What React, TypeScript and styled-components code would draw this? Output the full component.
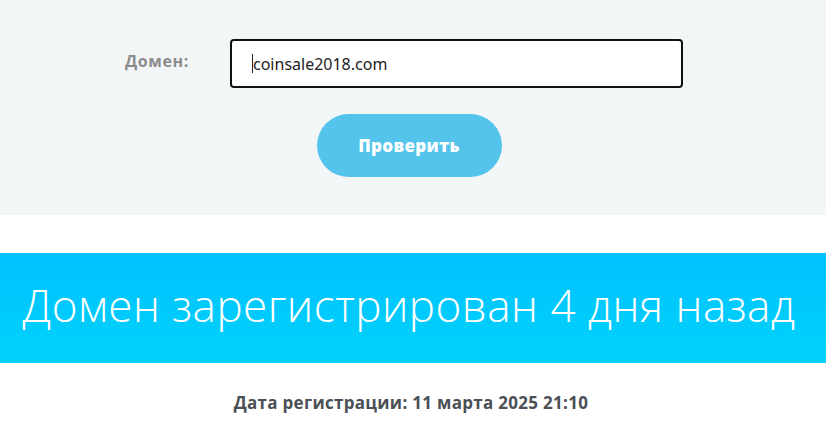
import styled, { createGlobalStyle } from 'styled-components';

const GlobalStyle = createGlobalStyle`
  html, body {
    margin: 0;
    padding: 0;
    background: #ffffff;
  }
  * {
    box-sizing: border-box;
  }
`;

const Page = styled.div`
  width: 100%;
  font-family: 'Open Sans', 'Liberation Sans', sans-serif;
`;

const FormPanel = styled.section`
  background: #f2f6f7;
  height: 215px;
  padding-top: 39px;
  display: flex;
  flex-flow: column nowrap;
  align-items: center;
`;

const FieldRow = styled.div`
  display: flex;
  align-items: center;
  padding-left: 125px;
  width: 100%;
`;

const Label = styled.label`
  width: 105px;
  font-size: 16px;
  font-weight: 700;
  color: #8c8c8c;
  letter-spacing: 0.6px;
  margin-top: -5px;
`;

const DomainInput = styled.div`
  width: 453px;
  height: 49px;
  border: 2px solid #111;
  border-radius: 4px;
  background: #fff;
  display: flex;
  align-items: center;
  padding-left: 20px;
  font-family: 'Noto Sans', 'Liberation Sans', sans-serif;
  font-size: 16px;
  color: #222;
`;

const Caret = styled.span`
  display: inline-block;
  width: 1px;
  height: 19px;
  background: #222;
`;

const CheckButton = styled.button`
  margin: 26px 8px 0 0;
  width: 185px;
  height: 63px;
  border: none;
  border-radius: 32px;
  background: #55c4ec;
  color: #fff;
  font-family: 'Open Sans', 'Liberation Sans', sans-serif;
  font-weight: 800;
  font-size: 17px;
  letter-spacing: 0.3px;
`;

const Banner = styled.section`
  margin-top: 38px;
  height: 110px;
  background: linear-gradient(180deg, #00c1ff 0%, #00d2fb 100%);
  display: flex;
  align-items: center;
  justify-content: center;
  padding: 0 8px 6px 0;
`;

const BannerTitle = styled.h1`
  margin: 0;
  font-weight: 300;
  font-size: 44px;
  color: #fff;
  letter-spacing: 0.5px;
  white-space: nowrap;
`;

const RegDate = styled.p`
  margin: 28px 0 0;
  padding-right: 4px;
  text-align: center;
  font-size: 17px;
  font-weight: 700;
  color: #4b4f56;
  letter-spacing: 0.3px;
`;

export default function App() {
  return (
    <Page>
      <GlobalStyle />
      <FormPanel>
        <FieldRow>
          <Label>Домен:</Label>
          <DomainInput>
            <Caret />
            coinsale2018.com
          </DomainInput>
        </FieldRow>
        <CheckButton>Проверить</CheckButton>
      </FormPanel>
      <Banner>
        <BannerTitle>Домен зарегистрирован 4 дня назад</BannerTitle>
      </Banner>
      <RegDate>Дата регистрации: 11 марта 2025 21:10</RegDate>
    </Page>
  );
}
